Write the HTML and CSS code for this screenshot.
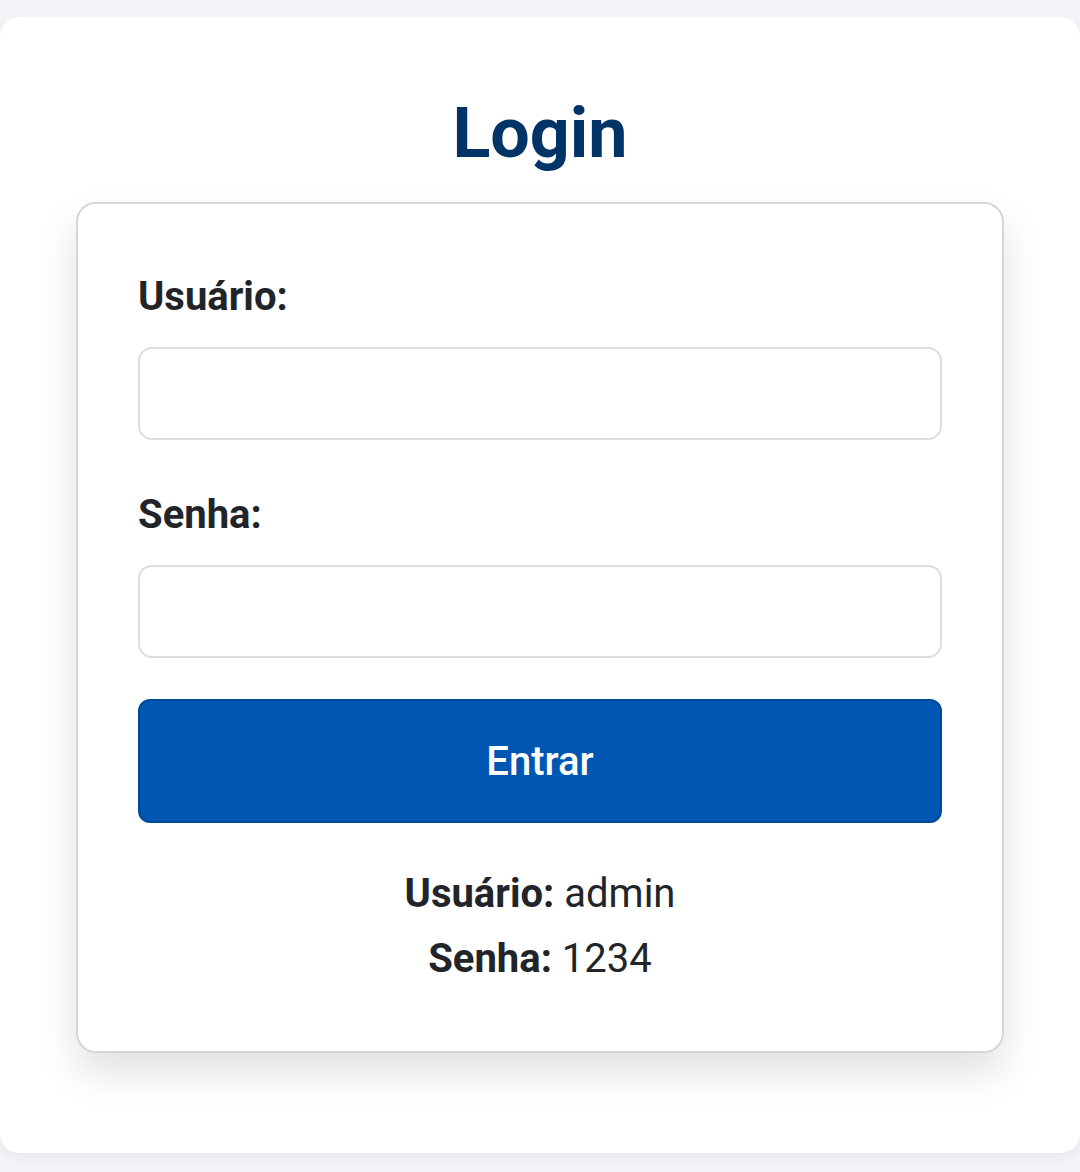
FILE: index.html
```html
<!DOCTYPE html>
<html lang="pt">
<head>
<meta charset="utf-8">
<title>Login</title>
<link rel="stylesheet" href="styles.css">
</head>
<body>
<main class="page">
  <h1 class="title">Login</h1>
  <form class="card">
    <label class="label" for="user">Usuário:</label>
    <input class="field" id="user" type="text">
    <label class="label label-gap" for="pass">Senha:</label>
    <input class="field" id="pass" type="password">
    <button class="btn" type="button">Entrar</button>
    <div class="info">
      <p><strong>Usuário:</strong> admin</p>
      <p><strong>Senha:</strong> 1234</p>
    </div>
  </form>
</main>
</body>
</html>
```
FILE: styles.css
```css
html, body {
  margin: 0;
  padding: 0;
}
body {
  background: #f3f4f8;
  font-family: Roboto, "Liberation Sans", sans-serif;
  color: #212529;
  padding-top: 17px;
  padding-bottom: 20px;
}
.page {
  width: 1080px;
  background: #ffffff;
  border-radius: 20px;
  box-shadow: 0 4px 14px rgba(0, 0, 0, 0.06);
  padding: 76px 0 100px;
  display: flex;
  flex-direction: column;
  align-items: center;
  box-sizing: border-box;
}
.title {
  margin: 0 0 29px;
  font-size: 70px;
  line-height: 80px;
  font-weight: 700;
  color: #003366;
}
.card {
  width: 928px;
  box-sizing: border-box;
  border: 2px solid #d6d6d6;
  border-radius: 20px;
  background: #fff;
  box-shadow: 0 20px 40px rgba(0, 0, 0, 0.12);
  padding: 72px 60px 60px;
  display: flex;
  flex-direction: column;
}
.label {
  font-size: 40px;
  line-height: 42px;
  font-weight: 700;
  color: #212529;
  margin-bottom: 29px;
}
.label-gap {
  margin-top: 54px;
  margin-bottom: 29px;
}
.field {
  height: 93px;
  box-sizing: border-box;
  border: 2px solid #dedede;
  border-radius: 14px;
  background: #fff;
  font-size: 36px;
  padding: 0 20px;
  margin: 0;
}
.btn {
  margin-top: 41px;
  height: 124px;
  box-sizing: border-box;
  background: #0056b3;
  border: 2px solid #004a99;
  border-radius: 12px;
  color: #fff;
  font-family: Roboto, "Liberation Sans", sans-serif;
  font-size: 40px;
  font-weight: 500;
}
.info {
  margin-top: 38px;
  text-align: center;
  font-size: 40px;
  line-height: 65px;
  color: #212529;
}
.info p {
  margin: 0;
}
.info strong {
  font-weight: 700;
}
```
